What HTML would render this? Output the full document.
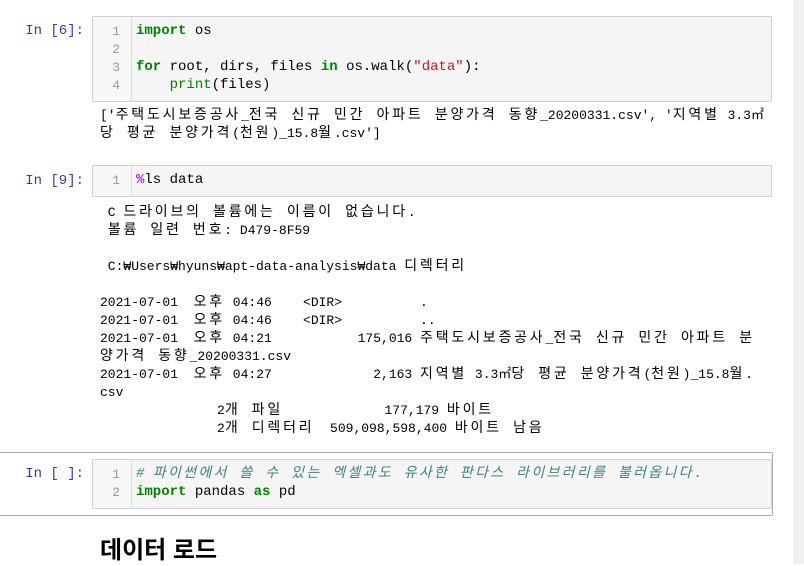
<!DOCTYPE html>
<html><head><meta charset="utf-8"><style>
body{margin:0;width:804px;height:564px;background:#fff;position:relative;overflow:hidden;font-family:"Liberation Mono","Noto Sans CJK KR",monospace;}
.a{position:absolute;white-space:pre;line-height:18px;}
.p{position:absolute;color:#303f9f;font-size:14px;text-align:right;width:84px;left:0;white-space:pre;}
.box{position:absolute;left:92px;width:678px;background:#f5f5f5;border:1px solid #cfcfcf;border-radius:2px;}
.g{position:absolute;left:0;top:0;bottom:0;width:38px;border-right:1px solid #ddd;background:#f7f7f7;}
.ln{position:absolute;color:#999;font-size:13px;width:28px;text-align:right;left:92px;}
.c{font-size:14px;color:#000;}
.o{font-size:13px;color:#000;}
.o .h{letter-spacing:2.8px;font-size:14px;line-height:18px}
.c .h{letter-spacing:2.3px;font-size:14px}
.k{color:#008000;font-weight:bold}
.s{color:#ba2121}
.b{color:#008000}
.m{color:#aa22ff;font-weight:bold}
.cm{color:#408080;font-style:italic}
</style></head><body>
<div class="p" style="top:23px">In [6]:</div>
<div class="box" style="top:16px;height:84px"><div class="g"></div></div>
<div class="ln" style="top:24px">1</div><div class="ln" style="top:42px">2</div><div class="ln" style="top:60px">3</div><div class="ln" style="top:78px">4</div>
<div class="a c" style="left:136px;top:22px"><span class="k">import</span> os</div>
<div class="a c" style="left:136px;top:58px"><span class="k">for</span> root, dirs, files <span class="k">in</span> os.walk(<span class="s">"data"</span>):</div>
<div class="a c" style="left:136px;top:76px">    <span class="b">print</span>(files)</div>
<div class="a o" style="left:100px;top:107px">['<span class="h">주택도시보증공사</span>_<span class="h">전국 신규 민간 아파트 분양가격 동향</span>_20200331.csv', '<span class="h">지역별</span> 3.3㎡</div>
<div class="a o" style="left:100px;top:125px"><span class="h">당 평균 분양가격</span>(<span class="h">천원</span>)_15.8<span class="h">월</span>.csv']</div>

<div class="p" style="top:173px">In [9]:</div>
<div class="box" style="top:165px;height:30px"><div class="g"></div></div>
<div class="ln" style="top:173px">1</div>
<div class="a c" style="left:136px;top:171px"><span class="m">%</span>ls data</div>
<div class="a o" style="left:100px;top:204px"> C <span class="h">드라이브의 볼륨에는 이름이 없습니다</span>.</div>
<div class="a o" style="left:100px;top:222px"> <span class="h">볼륨 일련 번호</span>: D479-8F59</div>
<div class="a o" style="left:100px;top:258px"> C:₩Users₩hyuns₩apt-data-analysis₩data <span class="h">디렉터리</span></div>
<div class="a o" style="left:100px;top:294px">2021-07-01  <span class="h">오후</span> 04:46    &lt;DIR&gt;          .</div>
<div class="a o" style="left:100px;top:312px">2021-07-01  <span class="h">오후</span> 04:46    &lt;DIR&gt;          ..</div>
<div class="a o" style="left:100px;top:330px">2021-07-01  <span class="h">오후</span> 04:21           175,016 <span class="h">주택도시보증공사</span>_<span class="h">전국 신규 민간 아파트 분</span></div>
<div class="a o" style="left:100px;top:348px"><span class="h">양가격 동향</span>_20200331.csv</div>
<div class="a o" style="left:100px;top:366px">2021-07-01  <span class="h">오후</span> 04:27             2,163 <span class="h">지역별</span> 3.3㎡<span class="h">당 평균 분양가격</span>(<span class="h">천원</span>)_15.8<span class="h">월</span>.</div>
<div class="a o" style="left:100px;top:384px">csv</div>
<div class="a o" style="left:100px;top:402px">               2<span class="h">개 파일</span>             177,179 <span class="h">바이트</span></div>
<div class="a o" style="left:100px;top:420px">               2<span class="h">개 디렉터리</span>  509,098,598,400 <span class="h">바이트 남음</span></div>

<div style="position:absolute;left:-1px;top:452px;width:772px;height:62px;border:1px solid #ababab;border-radius:2px"></div>
<div class="p" style="top:466px">In [ ]:</div>
<div class="box" style="top:459px;height:48px"><div class="g"></div></div>
<div class="ln" style="top:467px">1</div><div class="ln" style="top:485px">2</div>
<div class="a c" style="left:136px;top:465px"><span class="cm"># <span class="h">파이썬에서 쓸 수 있는 엑셀과도 유사한 판다스 라이브러리를 불러옵니다</span>.</span></div>
<div class="a c" style="left:136px;top:483px"><span class="k">import</span> pandas <span class="k">as</span> pd</div>

<div style="position:absolute;left:100px;top:536px;white-space:pre;font-family:'Liberation Sans','Noto Sans CJK KR',sans-serif;font-weight:bold;font-size:24px;line-height:30px;color:#000">데이터 로드</div>
<div style="position:absolute;left:794px;top:0;width:10px;height:564px;background:#f0f0f0;border-left:1px solid #e4e4e4"></div>
</body></html>
